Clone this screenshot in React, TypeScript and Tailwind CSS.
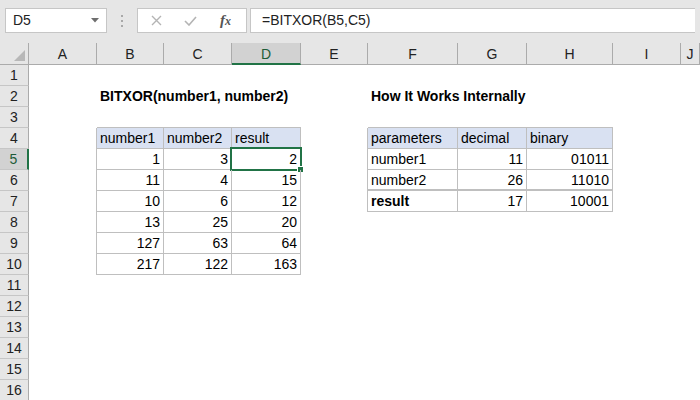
import React from 'react'

type Cell = { v: string; right?: boolean; bold?: boolean; head?: boolean }

const COLS = ['A', 'B', 'C', 'D', 'E', 'F', 'G', 'H', 'I', 'J']

const cells: Record<string, Cell> = {
  B2: { v: 'BITXOR(number1, number2)', bold: true },
  F2: { v: 'How It Works Internally', bold: true },
  B4: { v: 'number1', head: true },
  C4: { v: 'number2', head: true },
  D4: { v: 'result', head: true },
  F4: { v: 'parameters', head: true },
  G4: { v: 'decimal', head: true },
  H4: { v: 'binary', head: true },
  B5: { v: '1', right: true },
  C5: { v: '3', right: true },
  D5: { v: '2', right: true },
  B6: { v: '11', right: true },
  C6: { v: '4', right: true },
  D6: { v: '15', right: true },
  B7: { v: '10', right: true },
  C7: { v: '6', right: true },
  D7: { v: '12', right: true },
  B8: { v: '13', right: true },
  C8: { v: '25', right: true },
  D8: { v: '20', right: true },
  B9: { v: '127', right: true },
  C9: { v: '63', right: true },
  D9: { v: '64', right: true },
  B10: { v: '217', right: true },
  C10: { v: '122', right: true },
  D10: { v: '163', right: true },
  F5: { v: 'number1' },
  G5: { v: '11', right: true },
  H5: { v: '01011', right: true },
  F6: { v: 'number2' },
  G6: { v: '26', right: true },
  H6: { v: '11010', right: true },
  F7: { v: 'result', bold: true },
  G7: { v: '17', right: true },
  H7: { v: '10001', right: true },
}

// column index: A = 1
const inTable = (r: number, c: number) =>
  (r >= 4 && r <= 10 && c >= 2 && c <= 4) || (r >= 4 && r <= 7 && c >= 6 && c <= 8)

function TopBar() {
  return (
    <div className="flex h-[43px] items-start bg-[#e6e6e6] px-[5px] pt-[8px]">
      <div className="flex h-[25px] w-[102px] items-center justify-between border border-[#c6c6c6] bg-white pl-[7px] pr-[7px] text-[14px] text-[#222]">
        <span>D5</span>
        <svg width="8" height="5" viewBox="0 0 8 5">
          <path d="M0 0h8L4 4.5z" fill="#6e6e6e" />
        </svg>
      </div>
      <div className="flex h-[25px] w-[30px] flex-col items-center justify-center gap-[3px]">
        <span className="h-[2px] w-[2px] bg-[#a8a8a8]" />
        <span className="h-[2px] w-[2px] bg-[#a8a8a8]" />
        <span className="h-[2px] w-[2px] bg-[#a8a8a8]" />
      </div>
      <div className="flex h-[25px] w-[110px] items-center border border-[#c6c6c6] bg-white">
        <svg className="ml-[13px]" width="11" height="11" viewBox="0 0 11 11">
          <path d="M1 1l9 9M10 1l-9 9" stroke="#b4b4b4" strokeWidth="1.4" />
        </svg>
        <svg className="ml-[22px]" width="13" height="10" viewBox="0 0 13 10">
          <path d="M1 5l4 4 7-8" stroke="#b4b4b4" strokeWidth="1.6" fill="none" />
        </svg>
        <span className="ml-[23px] font-['Liberation_Serif',serif] text-[15px] italic font-bold leading-none text-[#555]">
          f<span className="text-[12px]">x</span>
        </span>
      </div>
      <div className="ml-[3px] flex h-[25px] flex-1 items-center border border-r-0 border-[#c6c6c6] bg-white pl-[11px] text-[14px] text-[#222]">
        =BITXOR(B5,C5)
      </div>
    </div>
  )
}

function Sheet() {
  const rows = Array.from({ length: 16 }, (_, i) => i + 1)
  return (
    <div className="grid grid-cols-[29px_68px_67px_68px_69px_67px_90px_69px_86px_68px_1fr] grid-rows-[22px_repeat(16,21px)]">
      <div className="relative border-r border-b border-[#ababab] bg-[#e6e6e6]">
        <svg className="absolute right-[3px] bottom-[3px]" width="11" height="11" viewBox="0 0 11 11">
          <path d="M11 0v11H0z" fill="#b8b8b8" />
        </svg>
      </div>
      {COLS.map((col) =>
        col === 'D' ? (
          <div
            key={col}
            className="flex items-center justify-center border-r border-r-[#ababab] border-b-2 border-b-[#217346] bg-[#d2d2d2] pt-[2px] text-[14px] text-[#1e5c38]"
          >
            {col}
          </div>
        ) : (
          <div
            key={col}
            className="flex items-center justify-center border-r border-b border-[#ababab] bg-[#e6e6e6] pt-[1px] text-[14px] text-[#222]"
          >
            {col}
          </div>
        ),
      )}
      {rows.map((r) => (
        <React.Fragment key={r}>
          {r === 5 ? (
            <div className="flex items-center justify-center border-r-2 border-r-[#217346] border-b border-b-[#c6c6c6] bg-[#d2d2d2] text-[14px] text-[#1e5c38]">
              {r}
            </div>
          ) : (
            <div className="flex items-center justify-center border-r border-r-[#ababab] border-b border-b-[#c6c6c6] bg-[#e6e6e6] text-[14px] text-[#222]">
              {r}
            </div>
          )}
          {COLS.map((col, i) => {
            const c = i + 1
            const cell = cells[col + r]
            const bottom = inTable(r, c) || inTable(r + 1, c)
            const thick = r === 6 && c >= 6 && c <= 8
            const right = inTable(r, c) || inTable(r, c + 1)
            return (
              <div
                key={col}
                className={[
                  'relative whitespace-nowrap border-[#bfbfbf] px-[3px] text-[14px] leading-[20px] text-black',
                  thick ? 'border-b-2' : bottom ? 'border-b' : '',
                  right ? 'border-r' : '',
                  cell?.head ? 'bg-[#d9e1f2]' : '',
                  cell?.right ? 'text-right' : '',
                  cell?.bold ? 'font-bold' : '',
                ].join(' ')}
              >
                {cell?.v}
                {col === 'D' && r === 5 && (
                  <>
                    <div className="absolute -top-[2px] -left-[2px] h-[24px] w-[72px] border-2 border-[#217346]" />
                    <div className="absolute -right-[4px] -bottom-[4px] h-[7px] w-[7px] border border-white bg-[#217346]" />
                  </>
                )}
              </div>
            )
          })}
        </React.Fragment>
      ))}
    </div>
  )
}

export default function App() {
  return (
    <div className="h-[400px] w-[700px] overflow-hidden bg-white font-['Liberation_Sans',Arial,sans-serif]">
      <TopBar />
      <Sheet />
    </div>
  )
}
